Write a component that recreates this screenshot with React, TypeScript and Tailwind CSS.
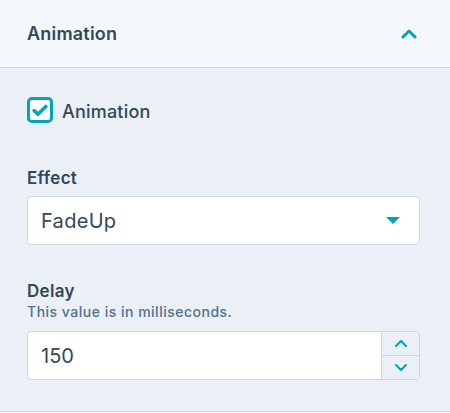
import React from "react";

export default function App() {
  return (
    <div
      className="w-[450px] h-[413px] bg-[#eaf0f6] text-[#33475b] overflow-hidden"
      style={{ fontFamily: "Inter, 'Open Sans', sans-serif" }}
    >
      <div className="h-[68px] bg-[#f5f8fa] border-b border-[#cbd6e2] flex items-center justify-between pl-[27px] pr-[33px]">
        <span className="text-[18px] font-semibold leading-none tracking-[0.2px]">Animation</span>
        <svg width="16" height="10" viewBox="0 0 16 10" fill="none">
          <path d="M2 8 L8 2 L14 8" stroke="#00a4bd" strokeWidth="3" strokeLinecap="round" strokeLinejoin="round" />
        </svg>
      </div>
      <div className="h-[344px] border-b border-[#cbd6e2] pl-[27px] pr-[30px] pt-[27px]">
        <label className="flex items-center gap-[9px]">
          <span className="w-[26px] h-[26px] rounded-[5px] border-[3px] border-[#00a4bd] bg-white flex items-center justify-center">
            <svg width="16" height="13" viewBox="0 0 16 13" fill="none">
              <path d="M2.2 6.6 L6 10.2 L13.8 2.4" stroke="#00a4bd" strokeWidth="3.6" strokeLinecap="round" strokeLinejoin="round" />
            </svg>
          </span>
          <span className="text-[18px] font-medium tracking-[0.2px] pt-[3px]">Animation</span>
        </label>

        <div className="mt-[41px] text-[17px] font-semibold leading-[24px] tracking-[0.3px]">Effect</div>
        <div className="mt-[6px] h-[49px] rounded-[4px] border border-[#cbd6e2] bg-white flex items-center justify-between pl-[13px] pr-[19px]">
          <span className="text-[20px] tracking-[0.3px]">FadeUp</span>
          <svg width="14" height="7" viewBox="0 0 14 7">
            <path d="M0 0 L14 0 L7 7 Z" fill="#00a4bd" />
          </svg>
        </div>

        <div className="mt-[34px] text-[17px] font-semibold leading-[24px] tracking-[0.3px]">Delay</div>
        <div className="text-[14px] font-medium leading-[18px] text-[#516f90] tracking-[0.5px]">This value is in milliseconds.</div>
        <div className="mt-[10px] h-[49px] rounded-[4px] border border-[#cbd6e2] bg-white flex overflow-hidden">
          <div className="flex-1 flex items-center pl-[13px] text-[20px]">150</div>
          <div className="w-[38px] border-l border-[#cbd6e2] bg-[#eaf0f6] flex flex-col">
            <div className="flex-1 flex items-center justify-center border-b border-[#cbd6e2]">
              <svg width="12" height="7" viewBox="0 0 12 7" fill="none">
                <path d="M1 6 L6 1 L11 6" stroke="#00a4bd" strokeWidth="2" strokeLinecap="round" strokeLinejoin="round" />
              </svg>
            </div>
            <div className="flex-1 flex items-center justify-center">
              <svg width="12" height="7" viewBox="0 0 12 7" fill="none">
                <path d="M1 1 L6 6 L11 1" stroke="#00a4bd" strokeWidth="2" strokeLinecap="round" strokeLinejoin="round" />
              </svg>
            </div>
          </div>
        </div>
      </div>
    </div>
  );
}
